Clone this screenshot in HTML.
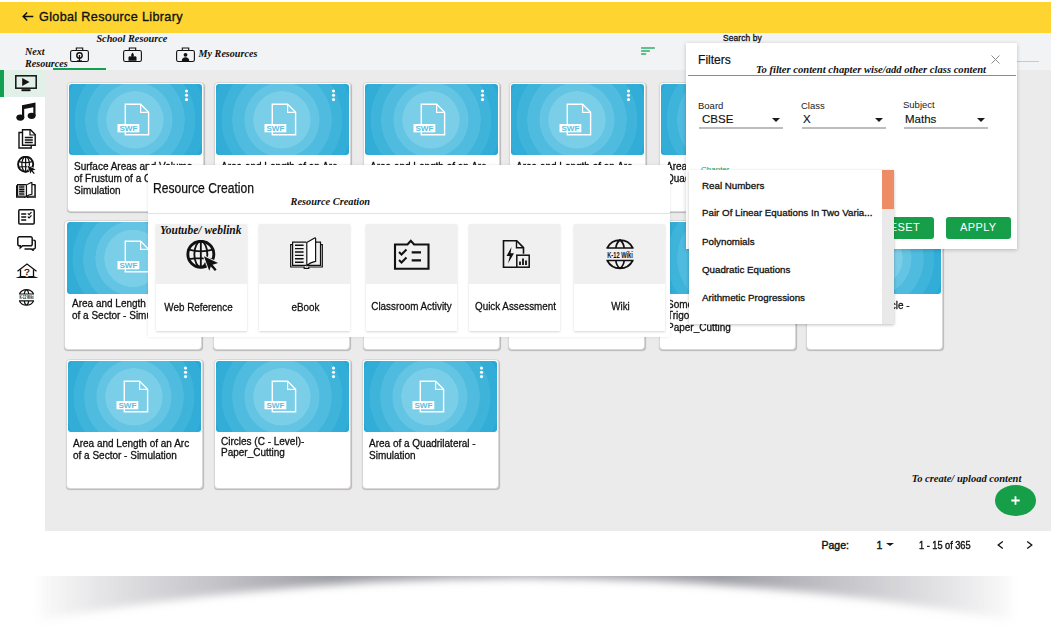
<!DOCTYPE html>
<html>
<head>
<meta charset="utf-8">
<title>Global Resource Library</title>
<style>
*{box-sizing:border-box;margin:0;padding:0}
html,body{width:1051px;height:628px;overflow:hidden;background:#fff}
body{position:relative;font-family:"Liberation Sans",sans-serif;color:#111}
.abs{position:absolute}
#topbar{left:0;top:2px;width:1051px;height:31px;background:#fdd430}
#title{left:39px;top:10px;font-size:12.6px;line-height:15px;color:#111;white-space:nowrap;letter-spacing:.35px;-webkit-text-stroke:0.35px #111}
#hdr{left:0;top:33px;width:1051px;height:37px;background:#f2f3f5}
.note{position:absolute;font-family:"Liberation Serif",serif;font-style:italic;font-weight:bold;color:#111;white-space:nowrap;font-size:10.2px;line-height:12px}
#side{left:0;top:70px;width:45px;height:461px;background:#fff}
#sel{left:0;top:70px;width:45px;height:27px;background:#e2f1e7;border-left:4px solid #12a150}
#content{left:45px;top:70px;width:1006px;height:461px;background:#ebebeb}
.card{position:absolute;width:137.5px;height:130px;background:#fff;border:1px solid #dbd7d6;border-radius:4px;box-shadow:.5px 1px 1px rgba(0,0,0,.22)}
.card .img{position:absolute;left:1.5px;top:1px;width:133px;height:71.5px;border-radius:3px;
 background:radial-gradient(circle at 49.6% 50.5%,#7bcee8 0,#7bcee8 28.3px,#63c4e3 28.9px,#63c4e3 37.2px,#4fbbdf 37.8px,#4fbbdf 49.4px,#3fb4db 50px,#3fb4db 60px,#31add8 60.6px,#31add8 71px,#27a8d5 71.6px)}
.card .t{position:absolute;left:6.9px;top:78.7px;font-size:10.5px;line-height:11.6px;color:#111;white-space:nowrap;-webkit-text-stroke:0.3px #111;transform:scaleX(.952);transform-origin:0 0}
.card .dots{position:absolute;left:115.2px;top:5.7px}
.card svg.swf{position:absolute;left:47.7px;top:19.5px}
.sic{position:absolute}
#dlg{left:148px;top:165px;width:521.5px;height:172px;background:#fff;box-shadow:0 0 3px rgba(0,0,0,.10)}
#dlg .h{position:absolute;left:5px;top:15.2px;font-size:14px;line-height:16px;color:#111;white-space:nowrap;transform:scaleX(.865);transform-origin:0 0;-webkit-text-stroke:0.25px #111}
#dlg .ln{position:absolute;left:0;top:48px;width:521.5px;height:1px;background:#e3e3e3}
.tile{position:absolute;top:59px;width:91px;height:107px;background:#fff;box-shadow:0 1px 2px rgba(0,0,0,.16)}
.tile .g{position:absolute;left:0;top:0;width:91px;height:60px;background:#f0f0f0}
.tile .l{position:absolute;left:-20px;width:131px;top:76.5px;text-align:center;font-size:11.8px;line-height:13px;color:#111;white-space:nowrap;transform:scaleX(.835);-webkit-text-stroke:0.3px #111}
#flt{left:686px;top:43px;width:331px;height:205.5px;background:#fff;box-shadow:0 1px 4px rgba(0,0,0,.22)}
.lab{position:absolute;font-size:9.5px;line-height:11px;color:#222;white-space:nowrap}
.val{position:absolute;font-size:11.5px;line-height:13px;color:#111;white-space:nowrap;-webkit-text-stroke:0.15px #111}
.ul{position:absolute;height:1.5px;background:#bdbdbd}
.arr{position:absolute;width:0;height:0;border-left:4px solid transparent;border-right:4px solid transparent;border-top:4px solid #1a1a1a}
.btn{position:absolute;height:21.2px;background:#169e49;border-radius:3px;color:#fff;font-size:11px;line-height:21px;text-align:center;letter-spacing:.4px}
#dd{left:688.5px;top:170px;width:205.5px;height:153.5px;background:#fff;box-shadow:0 1px 3px rgba(0,0,0,.25)}
#dd .it{position:absolute;left:13.5px;font-size:9.75px;line-height:12px;color:#111;white-space:nowrap;-webkit-text-stroke:0.3px #111}
#dd .trk{position:absolute;left:193px;top:0;width:12.5px;height:153.5px;background:#e9e9e9}
#dd .thm{position:absolute;left:193px;top:0;width:12.5px;height:39px;background:#ee8c66}
#foot{left:0;top:531px;width:1051px;height:40px;background:#fff}
.pg{position:absolute;font-size:10.5px;line-height:12px;color:#111;white-space:nowrap;-webkit-text-stroke:0.4px #111;transform-origin:0 0}
#fab{left:994.5px;top:485px;width:41px;height:30.5px;border-radius:50%;background:#169e49;color:#fff}
</style>
</head>
<body>
<div id="topbar" class="abs"></div>
<svg class="abs" style="left:22px;top:11px" width="12" height="11" viewBox="0 0 12 11"><path d="M11.3 5.5H1.3M5.2 1.5L1.2 5.5l4 4" fill="none" stroke="#111" stroke-width="1.5"/></svg>
<div id="title" class="abs">Global Resource Library</div>
<div id="hdr" class="abs"></div>
<div class="note" style="left:25px;top:45.5px;font-size:10.1px;line-height:12.3px">Next<br>Resources</div><div class="note" style="left:96.4px;top:32.5px;font-size:10.25px">School Resource</div><div class="note" style="left:198.6px;top:48px;font-size:10.15px">My Resources</div><svg class="abs" style="left:70px;top:46.5px" width="20" height="16" viewBox="0 0 20 16"><rect x="0.6" y="3.5" width="17.8" height="11" rx="1.8" fill="none" stroke="#111" stroke-width="1.1"/><path d="M6.3 3.5V1h6.4v2.5" fill="none" stroke="#111" stroke-width="1.1"/><circle cx="9.5" cy="8.5" r="2.7" fill="none" stroke="#111" stroke-width="1.4"/><path d="M9.5 8v6" stroke="#111" stroke-width="1.3"/><path d="M7 13.8h5" stroke="#111" stroke-width="0.9"/></svg><svg class="abs" style="left:123px;top:46.5px" width="20" height="16" viewBox="0 0 20 16"><rect x="0.6" y="3.5" width="17.8" height="11" rx="1.8" fill="none" stroke="#111" stroke-width="1.1"/><path d="M6.3 3.5V1h6.4v2.5" fill="none" stroke="#111" stroke-width="1.1"/><path d="M5.5 13.8V10l1.5-1 1.2 1V7.5l1.3-2 1.3 2V10l1.2-1 1.5 1v3.8z" fill="#111"/></svg><svg class="abs" style="left:176px;top:46.5px" width="20" height="16" viewBox="0 0 20 16"><rect x="0.6" y="3.5" width="17.8" height="11" rx="1.8" fill="none" stroke="#111" stroke-width="1.1"/><path d="M6.3 3.5V1h6.4v2.5" fill="none" stroke="#111" stroke-width="1.1"/><circle cx="9.5" cy="7.8" r="1.9" fill="#111"/><path d="M5.8 14c0-2.6 1.5-3.8 3.7-3.8s3.7 1.2 3.7 3.8z" fill="#111"/></svg><div class="abs" style="left:53px;top:67.7px;width:52.6px;height:2.3px;background:#12a150"></div><svg class="abs" style="left:641px;top:46px" width="15" height="9" viewBox="0 0 15 9"><path d="M0.1 1.9h13.7M0.1 4.9h8.8M0.1 7.9h5" stroke="#2fb06a" stroke-width="1.5"/></svg><div class="abs" style="left:723px;top:33px;font-size:8.45px;line-height:10px;color:#111;white-space:nowrap;-webkit-text-stroke:.3px #111;letter-spacing:.1px">Search by</div><div class="abs" style="left:1016px;top:61px;width:23px;height:1px;background:#c9c9c9"></div>
<div id="side" class="abs"></div>
<div id="sel" class="abs"></div>
<div id="content" class="abs"></div>
<svg class="sic" style="left:15px;top:75px" width="22" height="17" viewBox="0 0 22 17"><rect x="0.8" y="0.8" width="20.4" height="12.4" fill="none" stroke="#111" stroke-width="1.5"/><path d="M7.2 2.9v8.2l7.3-4.1z" fill="#111"/><rect x="6.5" y="14.2" width="9" height="2" fill="#111"/></svg><svg class="sic" style="left:15.5px;top:101.5px" width="21" height="19" viewBox="0 0 21 19"><path d="M6 3.2L19.5 0.5V14h-2.2V5.3L8.2 7.1V16H6z" fill="#111"/><ellipse cx="4.3" cy="15.6" rx="4" ry="3.1" fill="#111"/><ellipse cx="15.6" cy="13.8" rx="4" ry="3.1" fill="#111"/></svg><svg class="sic" style="left:17.5px;top:128.5px" width="18" height="20" viewBox="0 0 18 20"><path d="M4.5 0.8h8l4.7 4.7v10.8H4.5z" fill="none" stroke="#111" stroke-width="1.4"/><path d="M12 1v5h5" fill="none" stroke="#111" stroke-width="1.2"/><path d="M4.3 3.5H1v15.5h12.2v-2.6" fill="none" stroke="#111" stroke-width="1.4"/><path d="M6.8 8.6h8M6.8 11h8M6.8 13.4h8" stroke="#111" stroke-width="1.5"/></svg><svg class="sic" style="left:16.5px;top:156.3px" width="19.8" height="18.6" viewBox="0 0 33 31"><circle cx="14.4" cy="13.8" r="12.6" fill="none" stroke="#111" stroke-width="3.2199999999999998"/><ellipse cx="14.4" cy="13.8" rx="6.3" ry="12.6" fill="none" stroke="#111" stroke-width="2.07"/><path d="M14.4 1.2v25.2M2.8 9.3Q14.4 12.6 26 9.3M2.8 18.6Q14.4 16.4 26 18.6" fill="none" stroke="#111" stroke-width="2.07"/><path d="M17.4 15.7L31.1 22.3 25.8 24.1 29.7 28.6 28 30.1 24.1 25.6 22.6 29.8z" fill="#111" stroke="#fff" stroke-width="1.8" paint-order="stroke" stroke-linejoin="miter"/></svg><svg class="sic" style="left:15.8px;top:182.1px" width="20.5" height="16.2" viewBox="0 0 33 32" preserveAspectRatio="none"><path d="M2.6 7.6H0.7V30H14.2v1.4h4.6V30H32.3V7.6H30.5" fill="none" stroke="#111" stroke-width="2"/><path d="M16.3 5.2H2.6V28.4H16.3" fill="none" stroke="#111" stroke-width="2"/><path d="M16.8 5.6L24.6 1c.6-.3 1 0 1 .6V24.4C22 25 19 26.5 16.8 28.8z" fill="#fff" stroke="#111" stroke-width="2" stroke-linejoin="round"/><path d="M25.6 5.2h4.9V28.4H17" fill="none" stroke="#111" stroke-width="2"/><path d="M5 8.2h8.6M5 11.6h8.6M5 15h8.6M5 18.4h8.6M5 21.8h8.6M5 25.2h8.6" stroke="#111" stroke-width="2.4"/></svg><svg class="sic" style="left:17.5px;top:208.5px" width="17" height="16" viewBox="0 0 17 16"><rect x="0.8" y="0.8" width="15.4" height="14.2" rx="1" fill="none" stroke="#111" stroke-width="1.5"/><path d="M3.2 5h5M3.2 8h5M3.2 11h5" stroke="#111" stroke-width="1.4"/><path d="M9.8 4.4l1.3 1.3 2.4-2.6M9.8 7.6l1.3 1.3 2.4-2.6" fill="none" stroke="#111" stroke-width="1.2"/></svg><svg class="sic" style="left:16.5px;top:235.5px" width="19" height="15" viewBox="0 0 19 15"><path d="M2.3 0.8h11.4a1.5 1.5 0 0 1 1.5 1.5v6a1.5 1.5 0 0 1-1.5 1.5H5.6l-2.3 2V9.8h-1A1.5 1.5 0 0 1 .8 8.3v-6A1.5 1.5 0 0 1 2.3 .8z" fill="#fff" stroke="#111" stroke-width="1.5"/><path d="M16.3 4.2h.6a1.4 1.4 0 0 1 1.4 1.4v6a1.4 1.4 0 0 1-1.4 1.4h-.8v1.4l-1.9-1.4H7.5" fill="none" stroke="#111" stroke-width="1.4"/></svg><svg class="sic" style="left:14.5px;top:262.5px" width="24" height="16" viewBox="0 0 24 16"><path d="M2.5 8.3L12 1l9.5 7.3" fill="none" stroke="#111" stroke-width="1.3"/><path d="M5.5 6.5v6.5M18.5 6.5v6.5" stroke="#111" stroke-width="1.3"/><path d="M0.5 15l5-2h4.5l2 1 2-1h4.5l5 2z" fill="#111"/><text x="12" y="12" font-family="Liberation Sans, sans-serif" font-size="9.5" text-anchor="middle" fill="#111" stroke="#111" stroke-width=".3">?</text></svg><svg class="sic" style="left:16.8px;top:288.6px" width="19" height="17.2" viewBox="0 0 28 31"><path d="M0.4 9H27.6M1.2 9A14.4 14.4 0 0 1 26.8 9M14 1Q10.3 4 9.8 9M14 1Q17.7 4 18.2 9" fill="none" stroke="#111" stroke-width="2.2"/><path d="M0.4 21.5H27.6M1.2 21.5A14.4 14.4 0 0 0 26.8 21.5M14 29.5Q10.3 26.5 9.8 21.5M14 29.5Q17.7 26.5 18.2 21.5" fill="none" stroke="#111" stroke-width="2.2"/><text x="14" y="18.7" font-family="Liberation Sans, sans-serif" font-size="9.3" font-weight="bold" text-anchor="middle" fill="#111" textLength="25.5" lengthAdjust="spacingAndGlyphs">K-12 Wiki</text></svg>
<div class="card" style="left:66.5px;top:81.7px"><div class="img"><svg class="swf" width="36" height="34" viewBox="0 0 36 34"><path d="M8.3 1.3h15.3l8 8v22.4H8.3z" fill="none" stroke="#fff" stroke-width="1.4" stroke-linejoin="miter"/><path d="M23.6 1.3v8h8" fill="none" stroke="#fff" stroke-width="1.2"/><rect x="0.5" y="21" width="21.8" height="8.3" fill="#fff"/><text x="11.4" y="27.8" font-family="Liberation Sans, sans-serif" font-weight="bold" font-size="7" text-anchor="middle" fill="#5cc0e1" textLength="18" lengthAdjust="spacingAndGlyphs">SWF</text></svg><svg class="dots" width="5" height="14" viewBox="0 0 5 14"><circle cx="2.5" cy="2" r="1.55" fill="#fff"/><circle cx="2.5" cy="6.3" r="1.55" fill="#fff"/><circle cx="2.5" cy="10.6" r="1.55" fill="#fff"/></svg></div><div class="t">Surface Areas and Volume<br>of Frustum of a Cone -<br>Simulation</div></div><div class="card" style="left:213.5px;top:81.7px"><div class="img"><svg class="swf" width="36" height="34" viewBox="0 0 36 34"><path d="M8.3 1.3h15.3l8 8v22.4H8.3z" fill="none" stroke="#fff" stroke-width="1.4" stroke-linejoin="miter"/><path d="M23.6 1.3v8h8" fill="none" stroke="#fff" stroke-width="1.2"/><rect x="0.5" y="21" width="21.8" height="8.3" fill="#fff"/><text x="11.4" y="27.8" font-family="Liberation Sans, sans-serif" font-weight="bold" font-size="7" text-anchor="middle" fill="#5cc0e1" textLength="18" lengthAdjust="spacingAndGlyphs">SWF</text></svg><svg class="dots" width="5" height="14" viewBox="0 0 5 14"><circle cx="2.5" cy="2" r="1.55" fill="#fff"/><circle cx="2.5" cy="6.3" r="1.55" fill="#fff"/><circle cx="2.5" cy="10.6" r="1.55" fill="#fff"/></svg></div><div class="t">Area and Length of an Arc<br>of a Sector - Simulation</div></div><div class="card" style="left:362.5px;top:81.7px"><div class="img"><svg class="swf" width="36" height="34" viewBox="0 0 36 34"><path d="M8.3 1.3h15.3l8 8v22.4H8.3z" fill="none" stroke="#fff" stroke-width="1.4" stroke-linejoin="miter"/><path d="M23.6 1.3v8h8" fill="none" stroke="#fff" stroke-width="1.2"/><rect x="0.5" y="21" width="21.8" height="8.3" fill="#fff"/><text x="11.4" y="27.8" font-family="Liberation Sans, sans-serif" font-weight="bold" font-size="7" text-anchor="middle" fill="#5cc0e1" textLength="18" lengthAdjust="spacingAndGlyphs">SWF</text></svg><svg class="dots" width="5" height="14" viewBox="0 0 5 14"><circle cx="2.5" cy="2" r="1.55" fill="#fff"/><circle cx="2.5" cy="6.3" r="1.55" fill="#fff"/><circle cx="2.5" cy="10.6" r="1.55" fill="#fff"/></svg></div><div class="t">Area and Length of an Arc<br>of a Sector - Simulation</div></div><div class="card" style="left:508.5px;top:81.7px"><div class="img"><svg class="swf" width="36" height="34" viewBox="0 0 36 34"><path d="M8.3 1.3h15.3l8 8v22.4H8.3z" fill="none" stroke="#fff" stroke-width="1.4" stroke-linejoin="miter"/><path d="M23.6 1.3v8h8" fill="none" stroke="#fff" stroke-width="1.2"/><rect x="0.5" y="21" width="21.8" height="8.3" fill="#fff"/><text x="11.4" y="27.8" font-family="Liberation Sans, sans-serif" font-weight="bold" font-size="7" text-anchor="middle" fill="#5cc0e1" textLength="18" lengthAdjust="spacingAndGlyphs">SWF</text></svg><svg class="dots" width="5" height="14" viewBox="0 0 5 14"><circle cx="2.5" cy="2" r="1.55" fill="#fff"/><circle cx="2.5" cy="6.3" r="1.55" fill="#fff"/><circle cx="2.5" cy="10.6" r="1.55" fill="#fff"/></svg></div><div class="t">Area and Length of an Arc<br>of a Sector - Simulation</div></div><div class="card" style="left:658.5px;top:81.7px"><div class="img"><svg class="swf" width="36" height="34" viewBox="0 0 36 34"><path d="M8.3 1.3h15.3l8 8v22.4H8.3z" fill="none" stroke="#fff" stroke-width="1.4" stroke-linejoin="miter"/><path d="M23.6 1.3v8h8" fill="none" stroke="#fff" stroke-width="1.2"/><rect x="0.5" y="21" width="21.8" height="8.3" fill="#fff"/><text x="11.4" y="27.8" font-family="Liberation Sans, sans-serif" font-weight="bold" font-size="7" text-anchor="middle" fill="#5cc0e1" textLength="18" lengthAdjust="spacingAndGlyphs">SWF</text></svg><svg class="dots" width="5" height="14" viewBox="0 0 5 14"><circle cx="2.5" cy="2" r="1.55" fill="#fff"/><circle cx="2.5" cy="6.3" r="1.55" fill="#fff"/><circle cx="2.5" cy="10.6" r="1.55" fill="#fff"/></svg></div><div class="t">Area of a<br>Quadrilateral</div></div><div class="card" style="left:64px;top:220px"><div class="img"><svg class="swf" style="left:50.2px;top:18.2px" width="36" height="34" viewBox="0 0 36 34"><path d="M8.3 1.3h15.3l8 8v22.4H8.3z" fill="none" stroke="#fff" stroke-width="1.4" stroke-linejoin="miter"/><path d="M23.6 1.3v8h8" fill="none" stroke="#fff" stroke-width="1.2"/><rect x="0.5" y="21" width="21.8" height="8.3" fill="#fff"/><text x="11.4" y="27.8" font-family="Liberation Sans, sans-serif" font-weight="bold" font-size="7" text-anchor="middle" fill="#5cc0e1" textLength="18" lengthAdjust="spacingAndGlyphs">SWF</text></svg><svg class="dots" width="5" height="14" viewBox="0 0 5 14"><circle cx="2.5" cy="2" r="1.55" fill="#fff"/><circle cx="2.5" cy="6.3" r="1.55" fill="#fff"/><circle cx="2.5" cy="10.6" r="1.55" fill="#fff"/></svg></div><div class="t" style="top:77.4px;">Area and Length of an Arc<br>of a Sector - Simulation</div></div><div class="card" style="left:212.5px;top:220px"><div class="img"><svg class="swf" width="36" height="34" viewBox="0 0 36 34"><path d="M8.3 1.3h15.3l8 8v22.4H8.3z" fill="none" stroke="#fff" stroke-width="1.4" stroke-linejoin="miter"/><path d="M23.6 1.3v8h8" fill="none" stroke="#fff" stroke-width="1.2"/><rect x="0.5" y="21" width="21.8" height="8.3" fill="#fff"/><text x="11.4" y="27.8" font-family="Liberation Sans, sans-serif" font-weight="bold" font-size="7" text-anchor="middle" fill="#5cc0e1" textLength="18" lengthAdjust="spacingAndGlyphs">SWF</text></svg><svg class="dots" width="5" height="14" viewBox="0 0 5 14"><circle cx="2.5" cy="2" r="1.55" fill="#fff"/><circle cx="2.5" cy="6.3" r="1.55" fill="#fff"/><circle cx="2.5" cy="10.6" r="1.55" fill="#fff"/></svg></div><div class="t"></div></div><div class="card" style="left:362.5px;top:220px"><div class="img"><svg class="swf" width="36" height="34" viewBox="0 0 36 34"><path d="M8.3 1.3h15.3l8 8v22.4H8.3z" fill="none" stroke="#fff" stroke-width="1.4" stroke-linejoin="miter"/><path d="M23.6 1.3v8h8" fill="none" stroke="#fff" stroke-width="1.2"/><rect x="0.5" y="21" width="21.8" height="8.3" fill="#fff"/><text x="11.4" y="27.8" font-family="Liberation Sans, sans-serif" font-weight="bold" font-size="7" text-anchor="middle" fill="#5cc0e1" textLength="18" lengthAdjust="spacingAndGlyphs">SWF</text></svg><svg class="dots" width="5" height="14" viewBox="0 0 5 14"><circle cx="2.5" cy="2" r="1.55" fill="#fff"/><circle cx="2.5" cy="6.3" r="1.55" fill="#fff"/><circle cx="2.5" cy="10.6" r="1.55" fill="#fff"/></svg></div><div class="t"></div></div><div class="card" style="left:507.5px;top:220px"><div class="img"><svg class="swf" width="36" height="34" viewBox="0 0 36 34"><path d="M8.3 1.3h15.3l8 8v22.4H8.3z" fill="none" stroke="#fff" stroke-width="1.4" stroke-linejoin="miter"/><path d="M23.6 1.3v8h8" fill="none" stroke="#fff" stroke-width="1.2"/><rect x="0.5" y="21" width="21.8" height="8.3" fill="#fff"/><text x="11.4" y="27.8" font-family="Liberation Sans, sans-serif" font-weight="bold" font-size="7" text-anchor="middle" fill="#5cc0e1" textLength="18" lengthAdjust="spacingAndGlyphs">SWF</text></svg><svg class="dots" width="5" height="14" viewBox="0 0 5 14"><circle cx="2.5" cy="2" r="1.55" fill="#fff"/><circle cx="2.5" cy="6.3" r="1.55" fill="#fff"/><circle cx="2.5" cy="10.6" r="1.55" fill="#fff"/></svg></div><div class="t"></div></div><div class="card" style="left:658.7px;top:220px"><div class="img"><svg class="swf" width="36" height="34" viewBox="0 0 36 34"><path d="M8.3 1.3h15.3l8 8v22.4H8.3z" fill="none" stroke="#fff" stroke-width="1.4" stroke-linejoin="miter"/><path d="M23.6 1.3v8h8" fill="none" stroke="#fff" stroke-width="1.2"/><rect x="0.5" y="21" width="21.8" height="8.3" fill="#fff"/><text x="11.4" y="27.8" font-family="Liberation Sans, sans-serif" font-weight="bold" font-size="7" text-anchor="middle" fill="#5cc0e1" textLength="18" lengthAdjust="spacingAndGlyphs">SWF</text></svg><svg class="dots" width="5" height="14" viewBox="0 0 5 14"><circle cx="2.5" cy="2" r="1.55" fill="#fff"/><circle cx="2.5" cy="6.3" r="1.55" fill="#fff"/><circle cx="2.5" cy="10.6" r="1.55" fill="#fff"/></svg></div><div class="t" style="top:77.9px;">Some Applications of<br>Trigonometry (C - Level)-<br>Paper_Cutting</div></div><div class="card" style="left:805.9px;top:220px"><div class="img"><svg class="swf" width="36" height="34" viewBox="0 0 36 34"><path d="M8.3 1.3h15.3l8 8v22.4H8.3z" fill="none" stroke="#fff" stroke-width="1.4" stroke-linejoin="miter"/><path d="M23.6 1.3v8h8" fill="none" stroke="#fff" stroke-width="1.2"/><rect x="0.5" y="21" width="21.8" height="8.3" fill="#fff"/><text x="11.4" y="27.8" font-family="Liberation Sans, sans-serif" font-weight="bold" font-size="7" text-anchor="middle" fill="#5cc0e1" textLength="18" lengthAdjust="spacingAndGlyphs">SWF</text></svg><svg class="dots" width="5" height="14" viewBox="0 0 5 14"><circle cx="2.5" cy="2" r="1.55" fill="#fff"/><circle cx="2.5" cy="6.3" r="1.55" fill="#fff"/><circle cx="2.5" cy="10.6" r="1.55" fill="#fff"/></svg></div><div class="t" style="top:79.2px;">Area of a Semicircle -<br>Simulation</div></div><div class="card" style="left:65.5px;top:358.7px"><div class="img"><svg class="swf" width="36" height="34" viewBox="0 0 36 34"><path d="M8.3 1.3h15.3l8 8v22.4H8.3z" fill="none" stroke="#fff" stroke-width="1.4" stroke-linejoin="miter"/><path d="M23.6 1.3v8h8" fill="none" stroke="#fff" stroke-width="1.2"/><rect x="0.5" y="21" width="21.8" height="8.3" fill="#fff"/><text x="11.4" y="27.8" font-family="Liberation Sans, sans-serif" font-weight="bold" font-size="7" text-anchor="middle" fill="#5cc0e1" textLength="18" lengthAdjust="spacingAndGlyphs">SWF</text></svg><svg class="dots" width="5" height="14" viewBox="0 0 5 14"><circle cx="2.5" cy="2" r="1.55" fill="#fff"/><circle cx="2.5" cy="6.3" r="1.55" fill="#fff"/><circle cx="2.5" cy="10.6" r="1.55" fill="#fff"/></svg></div><div class="t">Area and Length of an Arc<br>of a Sector - Simulation</div></div><div class="card" style="left:213.5px;top:358.7px"><div class="img"><svg class="swf" width="36" height="34" viewBox="0 0 36 34"><path d="M8.3 1.3h15.3l8 8v22.4H8.3z" fill="none" stroke="#fff" stroke-width="1.4" stroke-linejoin="miter"/><path d="M23.6 1.3v8h8" fill="none" stroke="#fff" stroke-width="1.2"/><rect x="0.5" y="21" width="21.8" height="8.3" fill="#fff"/><text x="11.4" y="27.8" font-family="Liberation Sans, sans-serif" font-weight="bold" font-size="7" text-anchor="middle" fill="#5cc0e1" textLength="18" lengthAdjust="spacingAndGlyphs">SWF</text></svg><svg class="dots" width="5" height="14" viewBox="0 0 5 14"><circle cx="2.5" cy="2" r="1.55" fill="#fff"/><circle cx="2.5" cy="6.3" r="1.55" fill="#fff"/><circle cx="2.5" cy="10.6" r="1.55" fill="#fff"/></svg></div><div class="t" style="top:76.2px;">Circles (C - Level)-<br>Paper_Cutting</div></div><div class="card" style="left:361.5px;top:358.7px"><div class="img"><svg class="swf" width="36" height="34" viewBox="0 0 36 34"><path d="M8.3 1.3h15.3l8 8v22.4H8.3z" fill="none" stroke="#fff" stroke-width="1.4" stroke-linejoin="miter"/><path d="M23.6 1.3v8h8" fill="none" stroke="#fff" stroke-width="1.2"/><rect x="0.5" y="21" width="21.8" height="8.3" fill="#fff"/><text x="11.4" y="27.8" font-family="Liberation Sans, sans-serif" font-weight="bold" font-size="7" text-anchor="middle" fill="#5cc0e1" textLength="18" lengthAdjust="spacingAndGlyphs">SWF</text></svg><svg class="dots" width="5" height="14" viewBox="0 0 5 14"><circle cx="2.5" cy="2" r="1.55" fill="#fff"/><circle cx="2.5" cy="6.3" r="1.55" fill="#fff"/><circle cx="2.5" cy="10.6" r="1.55" fill="#fff"/></svg></div><div class="t">Area of a Quadrilateral -<br>Simulation</div></div>
<div id="foot" class="abs"></div><div class="pg" style="left:821.5px;top:538.7px">Page:</div><div class="pg" style="left:876.5px;top:538.7px">1</div><div class="arr" style="left:886.3px;top:542.6px;border-left-width:4.2px;border-right-width:4.2px;border-top-width:3.8px"></div><div class="pg" style="left:918.7px;top:538.7px;transform:scaleX(.875)">1 - 15 of 365</div><svg class="abs" style="left:996.5px;top:541px" width="7" height="8" viewBox="0 0 7 8"><path d="M5.8 0.5L1.2 4l4.6 3.5" fill="none" stroke="#111" stroke-width="1.3"/></svg><svg class="abs" style="left:1025.5px;top:541px" width="7" height="8" viewBox="0 0 7 8"><path d="M1.2 0.5L5.8 4 1.2 7.5" fill="none" stroke="#111" stroke-width="1.3"/></svg><div class="note" style="left:911.8px;top:473px;font-size:10.5px">To create/ upload content</div><div id="fab" class="abs"><svg class="abs" style="left:16px;top:10.5px" width="9" height="9" viewBox="0 0 9 9"><path d="M4.5 0.3v8.4M0.3 4.5h8.4" stroke="#fff" stroke-width="1.8"/></svg></div><svg class="abs" style="left:0;top:570px" width="1051" height="58" viewBox="0 570 1051 58"><defs><linearGradient id="sg" x1="0" x2="1" y1="0" y2="0"><stop offset="0" stop-color="#9c9ca4" stop-opacity="0.05"/><stop offset=".06" stop-color="#9c9ca4" stop-opacity=".25"/><stop offset=".18" stop-color="#9c9ca4" stop-opacity=".6"/><stop offset=".3" stop-color="#9c9ca4" stop-opacity="1"/><stop offset=".5" stop-color="#9c9ca4" stop-opacity=".9"/><stop offset=".7" stop-color="#9c9ca4" stop-opacity="1"/><stop offset=".82" stop-color="#9c9ca4" stop-opacity=".6"/><stop offset=".94" stop-color="#9c9ca4" stop-opacity=".25"/><stop offset="1" stop-color="#9c9ca4" stop-opacity="0.05"/></linearGradient><filter id="bl" x="-10%" y="-100%" width="120%" height="300%"><feGaussianBlur stdDeviation="4"/></filter><clipPath id="cp"><rect x="0" y="576" width="1051" height="60"/></clipPath></defs><g clip-path="url(#cp)"><path d="M40 560H1011V620Q525 536 40 620z" fill="url(#sg)" filter="url(#bl)"/></g></svg>
<div id="dlg" class="abs"><div class="h">Resource Creation</div><div class="ln"></div><div class="tile" style="left:8px"><div class="g"></div><svg class="abs" style="left:29.8px;top:15.8px" width="34" height="32" viewBox="0 0 33 31"><circle cx="14.4" cy="13.8" r="12.6" fill="none" stroke="#111" stroke-width="2.8"/><ellipse cx="14.4" cy="13.8" rx="6.3" ry="12.6" fill="none" stroke="#111" stroke-width="1.8"/><path d="M14.4 1.2v25.2M2.8 9.3Q14.4 12.6 26 9.3M2.8 18.6Q14.4 16.4 26 18.6" fill="none" stroke="#111" stroke-width="1.8"/><path d="M17.4 15.7L31.1 22.3 25.8 24.1 29.7 28.6 28 30.1 24.1 25.6 22.6 29.8z" fill="#111" stroke="#f0f0f0" stroke-width="1.8" paint-order="stroke" stroke-linejoin="miter"/></svg><div class="l" style="left:-23px;top:76.5px">Web Reference</div></div><div class="tile" style="left:111px"><div class="g"></div><svg class="abs" style="left:31px;top:12.5px" width="33" height="32" viewBox="0 0 33 32" preserveAspectRatio="none"><path d="M2.6 7.6H0.7V30H14.2v1.4h4.6V30H32.3V7.6H30.5" fill="none" stroke="#111" stroke-width="1.2"/><path d="M16.3 5.2H2.6V28.4H16.3" fill="none" stroke="#111" stroke-width="1.2"/><path d="M16.8 5.6L24.6 1c.6-.3 1 0 1 .6V24.4C22 25 19 26.5 16.8 28.8z" fill="#fff" stroke="#111" stroke-width="1.2" stroke-linejoin="round"/><path d="M25.6 5.2h4.9V28.4H17" fill="none" stroke="#111" stroke-width="1.2"/><path d="M5 8.2h8.6M5 11.6h8.6M5 15h8.6M5 18.4h8.6M5 21.8h8.6M5 25.2h8.6" stroke="#111" stroke-width="1.4"/></svg><div class="l" style="left:-19.5px;top:76.5px">eBook</div></div><div class="tile" style="left:217.5px"><div class="g"></div><svg class="abs" style="left:27.5px;top:14.5px" width="37" height="32" viewBox="0 0 37 32"><path d="M2 5.5h12.5l3.3-3.7 3.3 3.7h14.4v24.2H2z" fill="none" stroke="#111" stroke-width="2.1" stroke-linejoin="miter"/><path d="M18.7 13.4h9.3M18.7 21.4h9.3" stroke="#111" stroke-width="2.1"/><path d="M6 13l2.5 2.5 5-5M6 21l2.5 2.5 5-5" fill="none" stroke="#111" stroke-width="2"/></svg><div class="l" style="left:-19.8px;top:75.5px">Classroom Activity</div></div><div class="tile" style="left:321px"><div class="g"></div><svg class="abs" style="left:32.5px;top:15px" width="29" height="31" viewBox="0 0 29 31"><path d="M14.5 28.2H1.5V1.8h13.2l6.8 6.8v6.2" fill="none" stroke="#111" stroke-width="1.6"/><path d="M14.5 1.8v7h7" fill="none" stroke="#111" stroke-width="1.4"/><path d="M9.5 8l-5 9h3.3l-1.8 7.5 6-10.2H8.6z" fill="#111"/><rect x="14.8" y="16.2" width="12.4" height="12" fill="#f0f0f0" stroke="#111" stroke-width="1.5"/><path d="M18 26v-3.5M21 26v-6.5M24 26v-4.5" stroke="#111" stroke-width="1.8"/></svg><div class="l" style="left:-19.1px;top:75.5px">Quick Assessment</div></div><div class="tile" style="left:426px"><div class="g"></div><svg class="abs" style="left:32px;top:15px" width="28" height="31" viewBox="0 0 28 31"><path d="M0.4 9H27.6M1.2 9A14.4 14.4 0 0 1 26.8 9M14 1Q10.3 4 9.8 9M14 1Q17.7 4 18.2 9" fill="none" stroke="#111" stroke-width="1.7"/><path d="M0.4 21.5H27.6M1.2 21.5A14.4 14.4 0 0 0 26.8 21.5M14 29.5Q10.3 26.5 9.8 21.5M14 29.5Q17.7 26.5 18.2 21.5" fill="none" stroke="#111" stroke-width="1.7"/><text x="14" y="18.7" font-family="Liberation Sans, sans-serif" font-size="9.3" font-weight="bold" text-anchor="middle" fill="#111" textLength="25.5" lengthAdjust="spacingAndGlyphs">K-12 Wiki</text></svg><div class="l" style="left:-19.5px;top:75.5px">Wiki</div></div><div class="note" style="left:142.5px;top:31px;font-size:10.35px">Resource Creation</div><div class="note" style="left:12px;top:58.5px;font-size:11.5px">Youtube/ weblink</div></div>
<div id="flt" class="abs"><div class="abs" style="left:12px;top:10px;font-size:12.1px;line-height:14px;color:#111;-webkit-text-stroke:.2px #111">Filters</div><svg class="abs" style="left:304.8px;top:11.8px" width="9" height="9" viewBox="0 0 9 9"><path d="M0.5 0.5l8 8M8.5 0.5l-8 8" stroke="#8a8a8a" stroke-width="1"/></svg><div class="note" style="left:70px;top:21px;font-size:10.6px">To filter content chapter wise/add other class content</div><div class="abs" style="left:2px;top:31.9px;width:327.5px;height:1px;background:#8c8c8c"></div><div class="lab" style="left:12px;top:57px">Board</div><div class="val" style="left:16px;top:69.5px">CBSE</div><div class="ul" style="left:13px;top:84.2px;width:84px"></div><div class="arr" style="left:86px;top:74.8px"></div><div class="lab" style="left:115px;top:57px">Class</div><div class="val" style="left:117px;top:69.5px">X</div><div class="ul" style="left:116px;top:84.2px;width:84px"></div><div class="arr" style="left:189px;top:74.8px"></div><div class="lab" style="left:217px;top:56px">Subject</div><div class="val" style="left:219px;top:69.5px">Maths</div><div class="ul" style="left:218px;top:84.2px;width:84px"></div><div class="arr" style="left:291px;top:74.8px"></div><div class="abs" style="left:15px;top:122px;font-size:8px;line-height:9px;color:#169b48">Chapter</div><div class="btn" style="left:182px;width:65.5px;top:174.4px">RESET</div><div class="btn" style="left:259.5px;width:65.5px;top:174.4px">APPLY</div></div>
<div id="dd" class="abs"><div class="trk"></div><div class="thm"></div><div class="it" style="top:10px">Real Numbers</div><div class="it" style="top:37px">Pair Of Linear Equations In Two Varia...</div><div class="it" style="top:66px">Polynomials</div><div class="it" style="top:94px">Quadratic Equations</div><div class="it" style="top:122px">Arithmetic Progressions</div></div>
</body>
</html>
